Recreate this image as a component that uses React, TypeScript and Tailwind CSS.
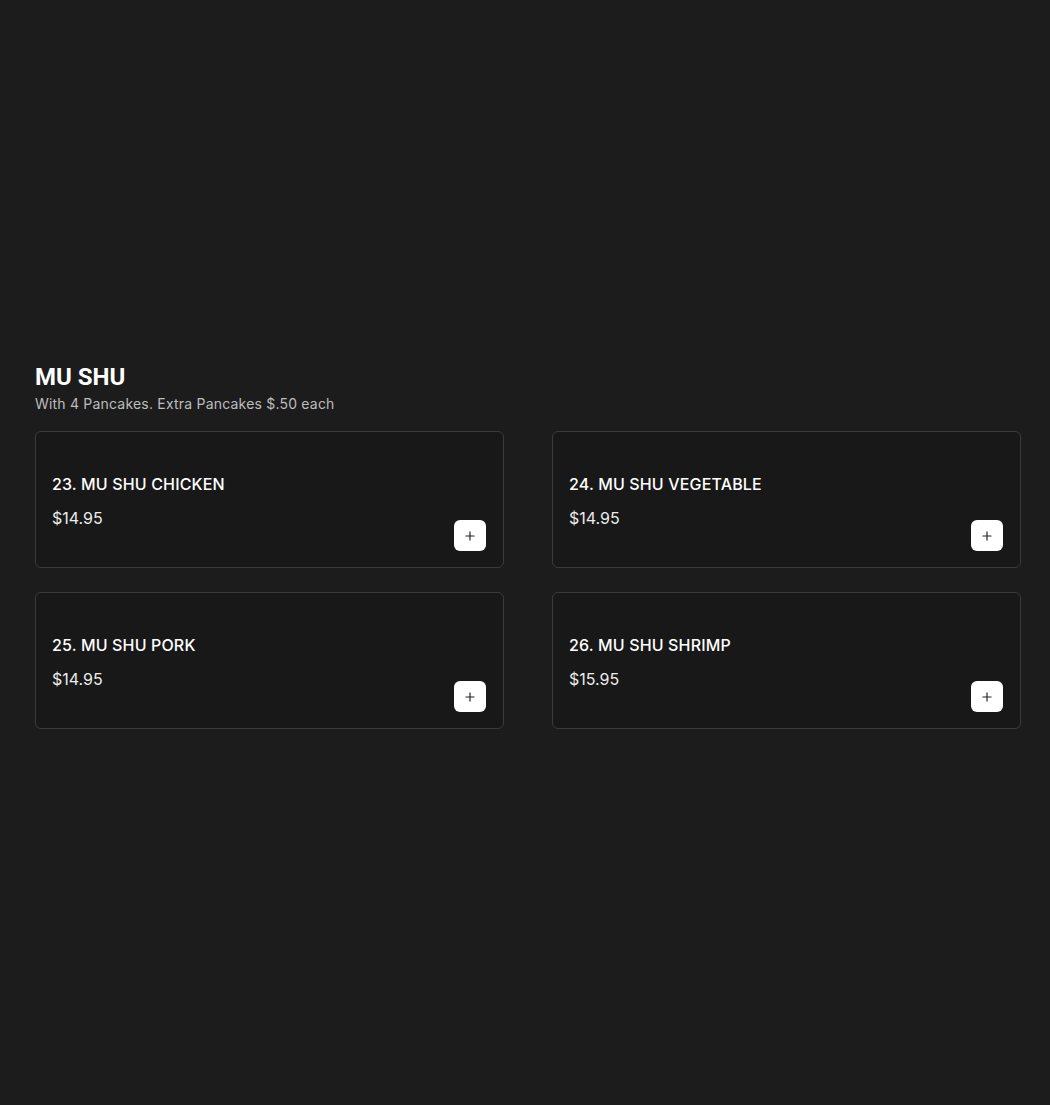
import React from 'react';
import { Plus } from 'lucide-react';

const items = [
  { id: 23, name: 'MU SHU CHICKEN', price: '$14.95' },
  { id: 24, name: 'MU SHU VEGETABLE', price: '$14.95' },
  { id: 25, name: 'MU SHU PORK', price: '$14.95' },
  { id: 26, name: 'MU SHU SHRIMP', price: '$15.95' },
];

export default function App() {
  return (
    <div className="min-h-[1105px] bg-[#1c1c1c] pt-[361px] pl-[35px] pr-[29px] font-['Inter',sans-serif] text-white">
      <h2 className="font-['Roboto',sans-serif] text-[24px] font-bold leading-[32px]">MU SHU</h2>
      <p className="mt-[1px] text-[14px] leading-[20px] tracking-[0.2px] text-[#bdbdbd]">
        With 4 Pancakes. Extra Pancakes $.50 each
      </p>

      <div className="mt-[17px] grid grid-cols-2 gap-x-[48px] gap-y-[24px]">
        {items.map((item) => (
          <div
            key={item.id}
            className="flex h-[137px] rounded-md border border-[#3b3b3b] bg-[#181818] pl-4 pr-[17px] pb-4"
          >
            <div className="flex flex-1 flex-col justify-center pt-[18px]">
              <h3 className="text-[16px] font-medium leading-6 tracking-[0.15px]">
                {item.id}. {item.name}
              </h3>
              <p className="mt-[10px] text-[16px] leading-6 text-[#ececec]">{item.price}</p>
            </div>
            <button className="self-end flex h-[31px] w-8 items-center justify-center rounded-md bg-white text-[#222]">
              <Plus size={14} strokeWidth={2} />
            </button>
          </div>
        ))}
      </div>
    </div>
  );
}
